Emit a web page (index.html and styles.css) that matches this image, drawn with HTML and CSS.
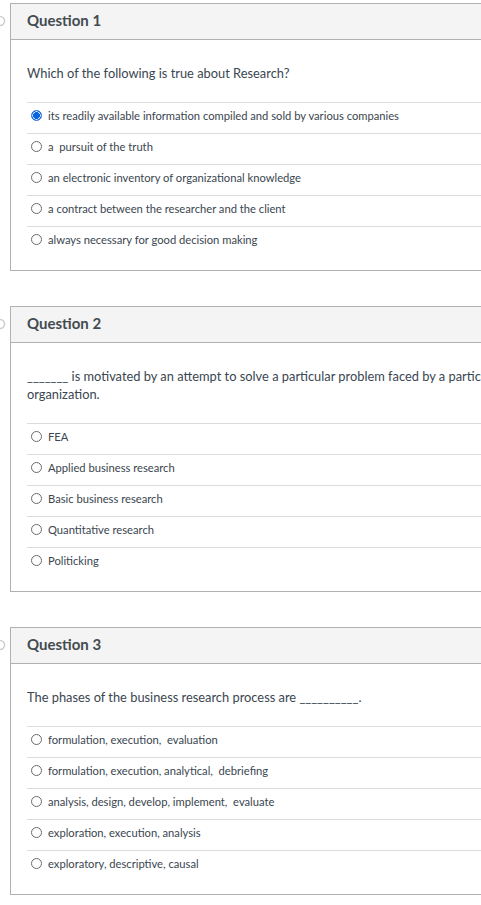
FILE: index.html
```html
<!DOCTYPE html>
<html lang="en">
<head>
<meta charset="utf-8">
<title>Quiz</title>
<link rel="stylesheet" href="styles.css">
</head>
<body>
<div class="quiz">
  <div class="question">
    <span class="marker"><svg width="12" height="12" viewBox="0 0 12 12"><circle cx="6" cy="6" r="4.5" fill="none" stroke="#c9ced2" stroke-width="1.5"/></svg></span>
    <div class="q-header"><h2 class="q-title">Question 1</h2></div>
    <div class="q-body">
      <p class="q-text">Which of the following is true about Research?</p>
      <div class="answers">
        <div class="answer"><span class="radio checked"></span><span class="label">its readily available information compiled and sold by various companies</span></div>
        <div class="answer"><span class="radio"></span><span class="label">a&nbsp; pursuit of the truth</span></div>
        <div class="answer"><span class="radio"></span><span class="label">an electronic inventory of organizational knowledge</span></div>
        <div class="answer"><span class="radio"></span><span class="label">a contract between the researcher and the client</span></div>
        <div class="answer"><span class="radio"></span><span class="label">always necessary for good decision making</span></div>
      </div>
    </div>
  </div>

  <div class="question">
    <span class="marker"><svg width="12" height="12" viewBox="0 0 12 12"><circle cx="6" cy="6" r="4.5" fill="none" stroke="#c9ced2" stroke-width="1.5"/></svg></span>
    <div class="q-header"><h2 class="q-title">Question 2</h2></div>
    <div class="q-body">
      <p class="q-text">_______ is motivated by an attempt to solve a particular problem faced by a particular organization.</p>
      <div class="answers">
        <div class="answer"><span class="radio"></span><span class="label">FEA</span></div>
        <div class="answer"><span class="radio"></span><span class="label">Applied business research</span></div>
        <div class="answer"><span class="radio"></span><span class="label">Basic business research</span></div>
        <div class="answer"><span class="radio"></span><span class="label">Quantitative research</span></div>
        <div class="answer"><span class="radio"></span><span class="label">Politicking</span></div>
      </div>
    </div>
  </div>

  <div class="question">
    <span class="marker"><svg width="12" height="12" viewBox="0 0 12 12"><circle cx="6" cy="6" r="4.5" fill="none" stroke="#c9ced2" stroke-width="1.5"/></svg></span>
    <div class="q-header"><h2 class="q-title">Question 3</h2></div>
    <div class="q-body">
      <p class="q-text">The phases of the business research process are __________.</p>
      <div class="answers">
        <div class="answer"><span class="radio"></span><span class="label">formulation, execution,&nbsp; evaluation</span></div>
        <div class="answer"><span class="radio"></span><span class="label">formulation, execution, analytical,&nbsp; debriefing</span></div>
        <div class="answer"><span class="radio"></span><span class="label">analysis, design, develop, implement,&nbsp; evaluate</span></div>
        <div class="answer"><span class="radio"></span><span class="label">exploration, execution, analysis</span></div>
        <div class="answer"><span class="radio"></span><span class="label">exploratory, descriptive, causal</span></div>
      </div>
    </div>
  </div>
</div>
</body>
</html>
```

FILE: styles.css
```css
html, body {
  margin: 0;
  padding: 0;
  overflow-x: hidden;
  background: #fff;
}
body {
  font-family: Lato, "Open Sans", "Liberation Sans", sans-serif;
  color: #2d3b45;
}
.quiz {
  display: flex;
  flex-direction: column;
  gap: 35px;
  padding: 3px 0 20px 10px;
}
.question {
  position: relative;
  width: 540px;
  border: 1px solid #b1b1b1;
  background: #fff;
}
.marker {
  position: absolute;
  left: -17px;
  top: 11px;
  width: 12px;
  height: 12px;
  display: block;
}
.marker svg { display: block; }
.q-header {
  background: #f4f4f4;
  border-bottom: 1px solid #b1b1b1;
  display: flex;
  align-items: center;
  padding: 0 16px 3px 16px;
  box-sizing: content-box;
  height: 32px;
}
.q-title {
  margin: 0;
  font-size: 15px;
  font-weight: 700;
  color: #444b50;
}
.q-body {
  padding: 24px 16px 13px 16px;
}
.q-text {
  margin: 0 0 20px 0;
  font-size: 12.85px;
  line-height: 18px;
  color: #3a4650;
}
.answers {
  display: flex;
  flex-direction: column;
}
.answer {
  height: 31px;
  box-sizing: border-box;
  border-top: 1px solid #dcdcdc;
  display: flex;
  align-items: center;
  padding: 0 0 6px 4px;
  font-size: 11.2px;
  color: #3a4650;
}
.radio {
  width: 9px;
  height: 9px;
  border: 1px solid #6b6b6b;
  border-radius: 50%;
  margin-right: 6px;
  flex: none;
  box-sizing: content-box;
}
.radio.checked {
  border-color: #1e6fe0;
  background: radial-gradient(circle, #0a66e0 0 3.2px, #d6e6fb 3.6px 4px, #1e6fe0 4.4px);
}
```
